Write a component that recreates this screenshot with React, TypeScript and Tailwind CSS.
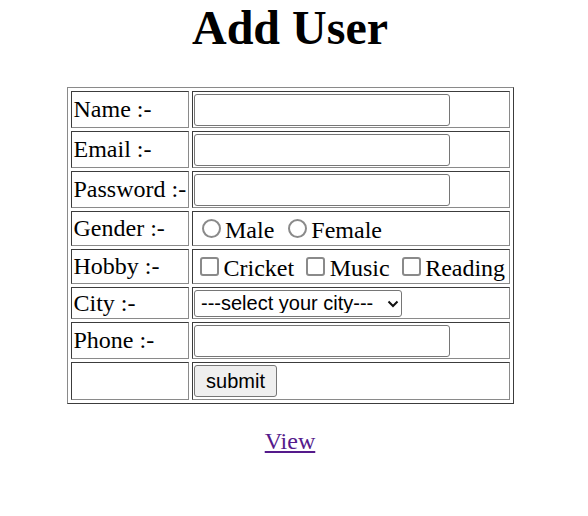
import React from "react"

const cell =
  "border border-t-[#3c3c3c] border-l-[#3c3c3c] border-r-[#8a8a8a] border-b-[#8a8a8a] p-[1.5px] align-middle"

const textInput =
  "block w-[256px] h-[32px] border border-[#767676] rounded-[3px] bg-white px-[3px] outline-none font-['Liberation_Sans',Arial,sans-serif] text-[20px]"

const radio =
  "appearance-none shrink-0 w-[19px] h-[19px] rounded-full border-2 border-[#8a8a8a] bg-white"

const checkbox =
  "appearance-none shrink-0 w-[19px] h-[19px] rounded-[3px] border-2 border-[#8a8a8a] bg-white"

const Row = (props: { label: string; h: string; children?: React.ReactNode }) => (
  <tr>
    <td className={`${cell} w-[118px] ${props.h} pl-[2px] pr-0 whitespace-nowrap`}>{props.label}</td>
    <td className={`${cell} ${props.h}`}>{props.children}</td>
  </tr>
)

export default function App() {
  return (
    <div className="w-[580px] text-center text-black font-['Liberation_Serif','Times_New_Roman',serif] text-[24px] leading-[normal] bg-white">
      <h1 className="text-[48px] font-bold leading-[normal] mb-[32px]">Add User</h1>

      <form onSubmit={(e) => e.preventDefault()}>
        <table className="mx-auto w-[447px] table-fixed border-separate border-spacing-[3px] border border-t-[#8a8a8a] border-l-[#8a8a8a] border-r-[#3c3c3c] border-b-[#3c3c3c] text-left">
          <tbody>
            <Row label="Name :-" h="h-[37px]">
              <input type="text" className={textInput} />
            </Row>
            <Row label="Email :-" h="h-[37px]">
              <input type="email" className={textInput} />
            </Row>
            <Row label="Password :-" h="h-[37px]">
              <input type="password" className={textInput} />
            </Row>
            <Row label="Gender :-" h="h-[35px]">
              <div className="flex items-center h-[29px] whitespace-nowrap">
                <input type="radio" name="gender" className={`${radio} ml-[7.5px] mr-[4.5px]`} />
                <span className="leading-[25px] pt-[4px]">Male</span>
                <input type="radio" name="gender" className={`${radio} ml-[13.5px] mr-[4.5px]`} />
                <span className="leading-[25px] pt-[4px]">Female</span>
              </div>
            </Row>
            <Row label="Hobby :-" h="h-[35px]">
              <div className="flex items-center h-[29px] whitespace-nowrap">
                <input type="checkbox" className={`${checkbox} ml-[6px] mr-[4.5px]`} />
                <span className="leading-[25px] pt-[3px]">Cricket</span>
                <input type="checkbox" className={`${checkbox} ml-[12px] mr-[4.5px]`} />
                <span className="leading-[25px] pt-[3px]">Music</span>
                <input type="checkbox" className={`${checkbox} ml-[12px] mr-[4.5px]`} />
                <span className="leading-[25px] pt-[3px]">Reading</span>
              </div>
            </Row>
            <Row label="City :-" h="h-[32px]">
              <div className="relative w-[208px]">
                <select className="block w-full h-[27px] appearance-none border border-[#767676] rounded-[3px] bg-white pl-[6px] pr-[24px] text-[20px] leading-none font-['Liberation_Sans',Arial,sans-serif] outline-none">
                  <option>---select your city---</option>
                  <option>Ahmedabad</option>
                  <option>Surat</option>
                  <option>Vadodara</option>
                </select>
                <svg
                  className="absolute right-[3px] top-[10px] pointer-events-none"
                  width="12"
                  height="8"
                  viewBox="0 0 12 8"
                  fill="none"
                >
                  <path d="M1.5 1.5l4.5 4.5 4.5-4.5" stroke="#111" strokeWidth="2" />
                </svg>
              </div>
            </Row>
            <Row label="Phone :-" h="h-[37px]">
              <input type="tel" className={textInput} />
            </Row>
            <Row label="" h="h-[38px]">
              <button
                type="submit"
                className="block w-[83px] h-[32px] border border-[#767676] rounded-[3px] bg-[#efefef] text-[20px] font-['Liberation_Sans',Arial,sans-serif] leading-none"
              >
                submit
              </button>
            </Row>
          </tbody>
        </table>
      </form>

      <p className="mt-[24px]">
        <a href="#" className="underline text-[#551a8b]">
          View
        </a>
      </p>
    </div>
  )
}
